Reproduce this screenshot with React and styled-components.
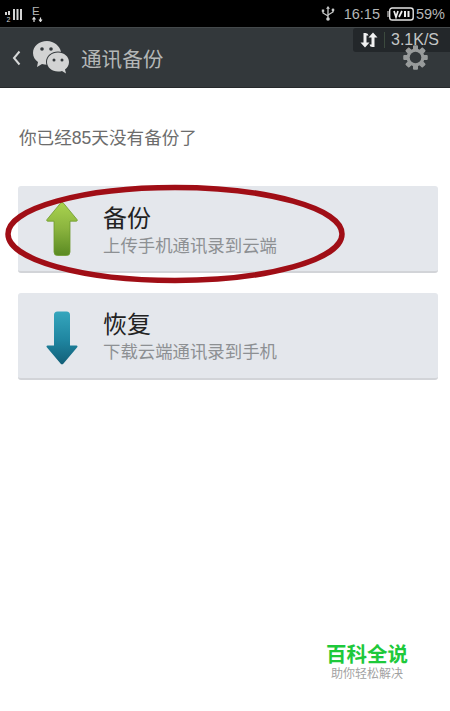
import styled, { createGlobalStyle } from "styled-components";

const GlobalStyle = createGlobalStyle`
  html, body {
    margin: 0;
    padding: 0;
    background: #fff;
  }
  body {
    font-family: "Liberation Sans", "Noto Sans CJK SC", sans-serif;
  }
`;

const Screen = styled.div`
  position: relative;
  width: 450px;
  height: 711px;
  overflow: hidden;
  background: #fff;
  display: flex;
  flex-direction: column;
`;

const StatusBar = styled.div`
  height: 27px;
  background: #000;
  display: flex;
  align-items: center;
  padding: 0 5px;
  color: #b5b7b7;
  box-sizing: border-box;
`;

const StatusRight = styled.div`
  margin-left: auto;
  display: flex;
  align-items: center;
`;

const Clock = styled.span`
  font-size: 14.5px;
  margin: 0 7px 0 9px;
`;

const Percent = styled.span`
  font-size: 14.5px;
  margin-left: 2px;
`;

const NetworkSlot = styled.div`
  margin-left: 9px;
  display: flex;
`;

const TitleBar = styled.div`
  height: 61px;
  box-sizing: border-box;
  background: #33383b;
  border-top: 1px solid #44494b;
  border-bottom: 1px solid #26292b;
  display: flex;
  align-items: center;
  padding-left: 12px;
  position: relative;
`;

const BackSlot = styled.div`
  display: flex;
  margin-right: 11px;
`;

const Title = styled.div`
  margin-left: 11px;
  font-size: 20.6px;
  color: #b4b7b7;
`;

const SpeedBadge = styled.div`
  position: absolute;
  top: 0;
  right: 0;
  width: 97px;
  height: 24px;
  background: #23272a;
  border-radius: 3px 0 0 3px;
  display: flex;
  align-items: center;
  color: #c4c6c6;
  font-size: 16px;
  box-sizing: border-box;
  padding-left: 7px;
`;

const BadgeDivider = styled.span`
  width: 1px;
  height: 16px;
  background: #3c4a3e;
  margin: 0 6px 0 6px;
`;

const GearSlot = styled.div`
  position: absolute;
  right: 22px;
  top: 17px;
  display: flex;
`;

const Content = styled.div`
  flex: 1;
  padding: 40px 12px 0 18px;
  display: flex;
  flex-direction: column;
`;

const Notice = styled.div`
  font-size: 17.6px;
  line-height: 20px;
  color: #6c6c6c;
  margin: 0 0 38px 1px;
`;

const ActionCard = styled.div`
  width: 420px;
  height: 87px;
  box-sizing: border-box;
  padding-top: ${(props) => props.$nudge}px;
  background: #e4e7ec;
  border-radius: 3px;
  border-bottom: 2px solid #d2d4d8;
  display: flex;
  align-items: center;
  margin-bottom: 20px;
`;

const IconSlot = styled.div`
  width: 85px;
  display: flex;
  justify-content: center;
  padding: ${(props) => props.$top || 0}px 0 ${(props) => props.$bottom || 0}px 3px;
  box-sizing: border-box;
`;

const CardText = styled.div`
  display: flex;
  flex-direction: column;
  gap: 3px;
`;

const CardTitle = styled.div`
  font-size: 24px;
  line-height: 28px;
  color: #222;
`;

const CardSub = styled.div`
  font-size: 17.4px;
  line-height: 20px;
  color: #8d9093;
`;

const Ellipse = styled.svg`
  position: absolute;
  left: 4px;
  top: 182px;
`;

const Watermark = styled.div`
  position: absolute;
  right: 42px;
  bottom: 29px;
  display: flex;
  flex-direction: column;
  align-items: center;
`;

const WatermarkTitle = styled.div`
  font-size: 20.5px;
  line-height: 25px;
  font-weight: 700;
  color: #1ec93b;
`;

const WatermarkSub = styled.div`
  font-size: 12px;
  line-height: 15px;
  color: #a2a2a2;
`;

function SignalIcon() {
  return (
    <svg width="18" height="17" viewBox="0 0 18 17">
      <g fill="#d4d4d4">
        <rect x="0" y="7" width="2" height="3" />
        <rect x="3" y="6" width="2" height="4" />
        <rect x="8" y="4" width="2" height="11" />
        <rect x="11.500" y="4" width="2" height="11" />
        <rect x="15" y="4" width="2" height="11" />
      </g>
      <text x="1.500" y="17" fontSize="7" fill="#d4d4d4">2</text>
    </svg>
  );
}

function NetworkIcon() {
  return (
    <svg width="11" height="17" viewBox="0 0 11 17">
      <text x="0" y="10" fontSize="11.500" fill="#b5b7b7">E</text>
      <path d="M2 17v-4M0.500 14.500l1.500-2 1.500 2M8.500 12.500v4M7 14.500l1.500 2 1.500-2" fill="none" stroke="#e0e0e0" strokeWidth="1.200" />
    </svg>
  );
}

function UsbIcon() {
  return (
    <svg width="14" height="15" viewBox="0 0 14 15">
      <g stroke="#c8caca" strokeWidth="1.300" fill="none">
        <path d="M7 2v11" />
        <path d="M2 5.500v1.500l5 3" />
        <path d="M12 4.500v1.500L7 9" />
      </g>
      <path d="M7 0l2 2.800H5z" fill="#c8caca" />
      <circle cx="7" cy="13" r="1.800" fill="#c8caca" />
      <rect x="0.800" y="3.500" width="2.400" height="2.400" fill="#c8caca" />
      <circle cx="12" cy="4" r="1.400" fill="#c8caca" />
    </svg>
  );
}

function BatteryIcon() {
  return (
    <svg width="27" height="14" viewBox="0 0 27 14">
      <rect x="0" y="4" width="2" height="6" fill="#777" />
      <rect x="2.700" y="1" width="23.500" height="12" rx="2.500" fill="none" stroke="#e4e4e4" strokeWidth="1.400" />
      <path d="M7 4l2 6 2-6M12 10l3-6" stroke="#eeeeee" strokeWidth="1.700" fill="none" />
      <rect x="17" y="4" width="2" height="6" fill="#eeeeee" />
      <rect x="20.500" y="4" width="2" height="6" fill="#eeeeee" />
    </svg>
  );
}

function TransferIcon() {
  return (
    <svg width="18" height="16" viewBox="0 0 18 16">
      <path d="M8.500 3.500A3 3 0 0 0 5.500 1H3.500V10.500H0.500L5 15.500 9.500 10.500H6.500V3.500z" fill="#f0f0f0" />
      <path d="M9.500 12.500A3 3 0 0 0 12.500 15H14.500V5.500H17.500L13 0.500 8.500 5.500H11.500V12.500z" fill="#f0f0f0" />
    </svg>
  );
}

function ChatIcon() {
  return (
    <svg width="38" height="36" viewBox="0 0 38 36">
      <path d="M15 1C7 1 1 6 1 13c0 4 2 7 5 9l-1 5 5-3c2 .6 4 .8 6 .7C25 24 30 19 29 12 28 6 22 1 15 1z" fill="#d2d3d3" />
      <ellipse cx="26" cy="22" rx="12" ry="10.500" fill="#33383b" />
      <path d="M26 12.500c-6 0-11 4-11 9.500s5 9.500 11 9.500c1.500 0 3-.2 4-.6l4 2.600-1-4c2.500-1.800 4-4.500 4-7.500 0-5.500-5-9.500-11-9.500z" fill="#d2d3d3" />
      <circle cx="10" cy="9" r="1.800" fill="#33383b" />
      <circle cx="19" cy="9" r="1.800" fill="#33383b" />
      <circle cx="22" cy="20" r="1.500" fill="#33383b" />
      <circle cx="30" cy="20" r="1.500" fill="#33383b" />
    </svg>
  );
}

function GearIcon() {
  const teeth = [0, 45, 90, 135, 180, 225, 270, 315];
  return (
    <svg width="25" height="25" viewBox="0 0 25 25">
      {teeth.map((deg) => (
        <rect key={deg} x="10" y="0.500" width="5" height="24" rx="1" fill="#989b9b" transform={`rotate(${deg} 12.500 12.500)`} />
      ))}
      <circle cx="12.500" cy="12.500" r="9" fill="#989b9b" />
      <circle cx="12.500" cy="12.500" r="5.800" fill="#33383b" />
    </svg>
  );
}

function UpArrow() {
  return (
    <svg width="32" height="54" viewBox="0 0 32 54">
      <defs>
        <linearGradient id="upFill" x1="0" y1="0" x2="0" y2="1">
          <stop offset="0" stopColor="#a9d34f" />
          <stop offset="0.5" stopColor="#8ab33e" />
          <stop offset="1" stopColor="#5a8a22" />
        </linearGradient>
      </defs>
      <path d="M14.500 1.200a2 2 0 0 1 3 0L31 17.500a1 1 0 0 1-.8 1.700H24V50a3.500 3.500 0 0 1-3.500 3.500h-9A3.500 3.500 0 0 1 8 50V19.200H1.800A1 1 0 0 1 1 17.500z" fill="url(#upFill)" stroke="#6d9a2c" strokeWidth="0.800" />
    </svg>
  );
}

function DownArrow() {
  return (
    <svg width="32" height="54" viewBox="0 0 32 54">
      <defs>
        <linearGradient id="downFill" x1="0" y1="0" x2="0" y2="1">
          <stop offset="0" stopColor="#35a6bd" />
          <stop offset="0.55" stopColor="#1f85a0" />
          <stop offset="1" stopColor="#125f78" />
        </linearGradient>
      </defs>
      <path d="M11.500 0.500h9A3.500 3.500 0 0 1 24 4V34.500h6.500a1 1 0 0 1 .7 1.700L17.500 52.500a2 2 0 0 1-3 0L0.800 36.200a1 1 0 0 1 .7-1.700H8V4A3.500 3.500 0 0 1 11.500 0.500z" fill="url(#downFill)" />
    </svg>
  );
}

export default function App() {
  return (
    <Screen>
      <GlobalStyle />
      <StatusBar>
        <SignalIcon />
        <NetworkSlot>
          <NetworkIcon />
        </NetworkSlot>
        <StatusRight>
          <UsbIcon />
          <Clock>16:15</Clock>
          <BatteryIcon />
          <Percent>59%</Percent>
        </StatusRight>
      </StatusBar>
      <TitleBar>
        <BackSlot>
          <svg width="9" height="16" viewBox="0 0 9 16">
            <path d="M7.500 1.500L2 8l5.500 6.500" fill="none" stroke="#d6d8d8" strokeWidth="2" />
          </svg>
        </BackSlot>
        <ChatIcon />
        <Title>通讯备份</Title>
        <SpeedBadge>
          <TransferIcon />
          <BadgeDivider />
          3.1K/S
        </SpeedBadge>
        <GearSlot>
          <GearIcon />
        </GearSlot>
      </TitleBar>
      <Content>
        <Notice>你已经85天没有备份了</Notice>
        <ActionCard $nudge={3}>
          <IconSlot $bottom={3}>
            <UpArrow />
          </IconSlot>
          <CardText>
            <CardTitle>备份</CardTitle>
            <CardSub>上传手机通讯录到云端</CardSub>
          </CardText>
        </ActionCard>
        <ActionCard $nudge={2}>
          <IconSlot $top={3}>
            <DownArrow />
          </IconSlot>
          <CardText>
            <CardTitle>恢复</CardTitle>
            <CardSub>下载云端通讯录到手机</CardSub>
          </CardText>
        </ActionCard>
      </Content>
      <Ellipse width="342" height="104" viewBox="0 0 342 104">
        <ellipse cx="171" cy="52" rx="167" ry="46.500" fill="none" stroke="#a00e16" strokeWidth="5.500" />
      </Ellipse>
      <Watermark>
        <WatermarkTitle>百科全说</WatermarkTitle>
        <WatermarkSub>助你轻松解决</WatermarkSub>
      </Watermark>
    </Screen>
  );
}
